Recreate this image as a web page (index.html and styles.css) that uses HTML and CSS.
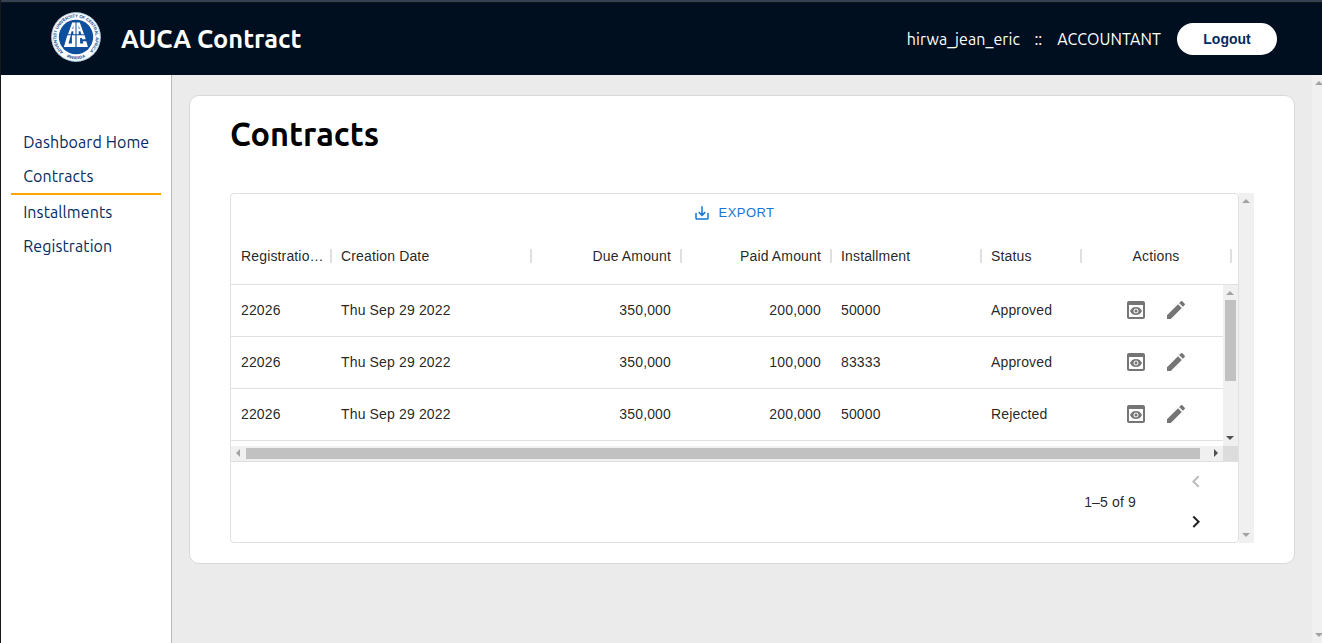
FILE: index.html
```html
<!DOCTYPE html>
<html lang="en">
<head>
<meta charset="utf-8">
<title>AUCA Contract</title>
<link rel="stylesheet" href="styles.css">
</head>
<body>
<svg class="defs" width="0" height="0" aria-hidden="true">
  <symbol id="preview" viewBox="0 0 24 24"><path d="M19 3H5c-1.11 0-2 .9-2 2v14c0 1.1.89 2 2 2h14c1.1 0 2-.9 2-2V5c0-1.1-.89-2-2-2zm0 16H5V7h14v12zm-5.5-6c0 .83-.67 1.5-1.5 1.5s-1.5-.67-1.5-1.5.67-1.5 1.5-1.5 1.5.67 1.5 1.5zM12 9c-2.73 0-5.06 1.66-6 4 .94 2.34 3.27 4 6 4s5.06-1.66 6-4c-.94-2.34-3.27-4-6-4zm0 6.5c-1.38 0-2.5-1.12-2.5-2.5s1.12-2.5 2.5-2.5 2.5 1.12 2.5 2.5-1.12 2.5-2.5 2.5z"/></symbol>
  <symbol id="edit" viewBox="0 0 24 24"><path d="M3 17.25V21h3.75L17.81 9.94l-3.75-3.75L3 17.25zM20.71 7.04c.39-.39.39-1.02 0-1.41l-2.34-2.34a.9959.9959 0 0 0-1.41 0l-1.83 1.83 3.75 3.75 1.83-1.83z"/></symbol>
</svg>
<div class="app">
  <header class="header">
    <svg class="logo" viewBox="0 0 50 50">
      <defs>
        <path id="ring" d="M12.5 40.2A19.6 19.6 0 1 1 37.5 40.2"/>
        <path id="ring-bottom" d="M13 43.8A22.4 22.4 0 0 0 37 43.8"/>
      </defs>
      <circle cx="25" cy="25" r="24.7" fill="#fff"/>
      <circle cx="25" cy="25" r="24.3" fill="none" stroke="#8fb4d8" stroke-width=".7"/>
      <circle cx="25" cy="25" r="17.2" fill="#0d4f9c"/>
      <text class="logo-ring"><textPath href="#ring" textLength="94">ADVENTIST UNIVERSITY OF CENTRAL AFRICA</textPath></text>
      <text class="logo-ring"><textPath href="#ring-bottom" startOffset="50%" text-anchor="middle">RWANDA</textPath></text>
      <g fill="#fff" fill-rule="evenodd">
        <path d="M21.2 10.500h3.300v11.700h-2.200v-3h-1.700l-.8 3H17zM21.300 16.800h1v-3.500z"/>
        <path d="M28.800 10.500h-3.300v11.700h2.200v-3h1.700l.8 3H33zM28.700 16.800h-1v-3.500z"/>
        <path d="M16.300 23.300h3.500l-2.300 8.300h3.400v-8.300h3.500v11.600H12.900zM25.600 23.300h8l1.100 4h-3.500l-.4-1.400h-1.700v5.700h3.300l-.7-2.300h3.600l1.600 5.600H25.600z"/>
      </g>
    </svg>
    <h1 class="brand">AUCA Contract</h1>
    <div class="user">
      <span class="user-name">hirwa_jean_eric</span><span class="user-sep">::</span><span class="user-role">ACCOUNTANT</span>
    </div>
    <button class="logout">Logout</button>
  </header>
  <div class="body">
    <nav class="sidebar">
      <a class="link">Dashboard Home</a>
      <a class="link active">Contracts</a>
      <a class="link">Installments</a>
      <a class="link">Registration</a>
    </nav>
    <main class="main">
      <section class="card">
        <h2 class="title">Contracts</h2>
        <div class="grid-wrap">
          <div class="grid">
            <div class="toolbar">
              <svg class="export-icon" viewBox="0 0 24 24"><path d="M19 12v7H5v-7H3v7c0 1.1.9 2 2 2h14c1.1 0 2-.9 2-2v-7h-2zm-6 .67 2.59-2.58L17 11.5l-5 5-5-5 1.41-1.41L11 12.67V3h2z"/></svg>
              <span>EXPORT</span>
            </div>
            <div class="columns head">
              <div class="cell">Registratio…</div><div class="cell">Creation Date</div><div class="cell right">Due Amount</div><div class="cell right">Paid Amount</div><div class="cell">Installment</div><div class="cell">Status</div><div class="cell center">Actions</div><div class="cell"></div>
            </div>
            <div class="viewport">
              <div class="rows">
                <div class="columns row"><div class="cell">22026</div><div class="cell">Thu Sep 29 2022</div><div class="cell right">350,000</div><div class="cell right">200,000</div><div class="cell">50000</div><div class="cell">Approved</div><div class="cell center actions"><svg><use href="#preview"/></svg><svg><use href="#edit"/></svg></div></div>
                <div class="columns row"><div class="cell">22026</div><div class="cell">Thu Sep 29 2022</div><div class="cell right">350,000</div><div class="cell right">100,000</div><div class="cell">83333</div><div class="cell">Approved</div><div class="cell center actions"><svg><use href="#preview"/></svg><svg><use href="#edit"/></svg></div></div>
                <div class="columns row"><div class="cell">22026</div><div class="cell">Thu Sep 29 2022</div><div class="cell right">350,000</div><div class="cell right">200,000</div><div class="cell">50000</div><div class="cell">Rejected</div><div class="cell center actions"><svg><use href="#preview"/></svg><svg><use href="#edit"/></svg></div></div>
              </div>
              <div class="vbar"><i class="arrow up"></i><i class="vthumb"></i><i class="arrow down dark"></i></div>
              <div class="hbar"><i class="arrow left"></i><i class="hthumb"></i><i class="arrow to-right"></i></div>
              <div class="corner"></div>
            </div>
            <div class="footer">
              <span class="range">1–5 of 9</span>
              <div class="pager">
                <svg class="disabled" viewBox="0 0 24 24"><path d="M15.41 16.09l-4.58-4.59 4.58-4.59L14 5.5l-6 6 6 6z"/></svg>
                <svg viewBox="0 0 24 24"><path d="M8.59 16.34l4.58-4.59-4.58-4.59L10 5.75l6 6-6 6z"/></svg>
              </div>
            </div>
          </div>
          <div class="outer-bar"><i class="arrow up"></i><i class="arrow down"></i></div>
        </div>
      </section>
    </main>
    <div class="page-bar"><i class="arrow up"></i><i class="arrow down"></i></div>
  </div>
</div>
</body>
</html>
```
FILE: styles.css
```css
* { box-sizing: border-box; }
body { margin: 0; font-family: Ubuntu, "Noto Sans", sans-serif; }
.defs { position: absolute; }
.app {
  width: 1322px; height: 643px; overflow: hidden;
  display: flex; flex-direction: column;
  border-left: 1px solid #17191d; background: #ebebeb;
}
.header {
  height: 75px; flex: none; display: flex; align-items: center;
  padding: 1px 45px 0 50px;
  background: #000f20; border-top: 2px solid #344150;
  box-shadow: inset 0 1px #111417; color: #fff;
}
.logo { width: 50px; height: 50px; flex: none; margin-bottom: 4px; }
.logo-ring { font: bold 4.4px "Liberation Sans", sans-serif; fill: #174f91; }
.brand { margin: 0 0 0 20px; font-size: 25.4px; line-height: 30px; white-space: nowrap; }
.user { margin-left: auto; display: flex; font-size: 16px; line-height: 20px; white-space: nowrap; }
.user-name { letter-spacing: .07px; }
.user-sep { margin: 0 15px 0 14.5px; }
.user-role { letter-spacing: .07px; }
.logout {
  width: 100px; height: 32px; margin-left: 16px; padding: 0;
  border: 0; border-radius: 16px; background: #fff; color: #082960;
  font: bold 14px "Liberation Sans", sans-serif;
}
.body { flex: 1; min-height: 0; display: flex; }
.sidebar {
  width: 171px; flex: none; padding: 50px 10px 0;
  display: flex; flex-direction: column;
  background: #fff; border-right: 1px solid #b9b9b9;
}
.link {
  height: 34px; padding: 0 12.2px; line-height: 34px; font-size: 16px;
  letter-spacing: .09px; color: #052b60; white-space: nowrap;
}
.link.active { height: 36px; border-bottom: 2px solid #ffa500; }
.main { width: 1140px; flex: none; padding: 20px 17px; }
.card {
  width: 1106px; height: 469px; padding: 19px 40px 0;
  background: #fff; border: 1px solid #d9d9d9; border-radius: 10px;
}
.title { margin: 0; height: 78px; font-size: 32.5px; line-height: 38px; color: #000; }
.grid-wrap { display: flex; height: 350px; }
.grid {
  width: 1009px; flex: none; display: flex; flex-direction: column;
  border: 1px solid #e0e0e0; border-radius: 4px;
  font: 14px "Liberation Sans", sans-serif; letter-spacing: .15px; color: rgba(0,0,0,.87);
}
.toolbar {
  height: 34px; flex: none; padding: 3px 2px 0 0;
  display: flex; align-items: center; justify-content: center; gap: 8px;
  color: #1976d2; font-size: 13px; letter-spacing: .46px;
}
.export-icon { width: 18px; height: 18px; fill: currentColor; }
.columns { display: grid; grid-template-columns: 100px 200px 150px 150px 150px 100px 150px; flex: none; }
.cell { min-width: 0; padding: 0 10px; display: flex; align-items: center; white-space: nowrap; }
.right { justify-content: flex-end; }
.center { justify-content: center; }
.head {
  height: 57px; width: 1007px; border-bottom: 1px solid #e0e0e0;
  grid-template-columns: 100px 200px 150px 150px 150px 100px 150px 7px;
}
.head .cell { background: linear-gradient(#e0e0e0, #e0e0e0) right top 21px / 1px 14px no-repeat; }
.head .cell + .cell {
  background:
    linear-gradient(#e0e0e0, #e0e0e0) left top 21px / 1px 14px no-repeat,
    linear-gradient(#e0e0e0, #e0e0e0) right top 21px / 1px 14px no-repeat;
}
.head .cell:last-child {
  padding: 0;
  background: linear-gradient(#e0e0e0, #e0e0e0) left top 21px / 1px 14px no-repeat;
}
.viewport { height: 176px; flex: none; display: grid; grid-template: 161px 15px / 992px 15px; }
.rows { overflow: hidden; }
.row { height: 52px; padding-bottom: 1px; border-bottom: 1px solid #e0e0e0; width: 1000px; }
.actions { gap: 16px; }
.actions svg { width: 24px; height: 24px; fill: #757575; }
.vbar, .outer-bar, .page-bar { background: #f0f0f0; display: flex; flex-direction: column; align-items: center; justify-content: space-between; }
.vbar { padding: 6px 0; }
.vthumb { width: 11px; height: 81px; margin: 5px 0 auto; background: #c1c1c1; }
.hbar { background: #f0f0f0; display: flex; align-items: center; padding: 0 5px; }
.hthumb { width: 954px; height: 11px; margin: 0 auto 0 6px; background: #c1c1c1; }
.corner { background: #dcdcdc; }
.arrow { width: 0; height: 0; flex: none; border: 4px solid transparent; }
.up { border-top: 0; border-bottom-color: #a3a3a3; margin-right: 1px; }
.down { border-bottom: 0; border-top-color: #a3a3a3; margin-right: 1px; }
.left { border-left: 0; border-right-color: #a3a3a3; margin-bottom: 1px; }
.to-right { border-right: 0; border-left-color: #505050; margin-bottom: 1px; }
.down.dark { border-top-color: #505050; }
.outer-bar { width: 15px; padding: 6px 0; }
.page-bar { width: 15px; flex: none; padding: 6px 0; margin-right: -6px; }
.footer {
  flex: 1; border-top: 1px solid #e0e0e0;
  display: flex; align-items: center; justify-content: flex-end; padding-right: 30px;
}
.range { margin-right: 48px; }
.pager { display: flex; flex-direction: column; gap: 16px; }
.pager svg { width: 24px; height: 24px; fill: rgba(0,0,0,.87); }
.pager .disabled { fill: #bdbdbd; }
```
